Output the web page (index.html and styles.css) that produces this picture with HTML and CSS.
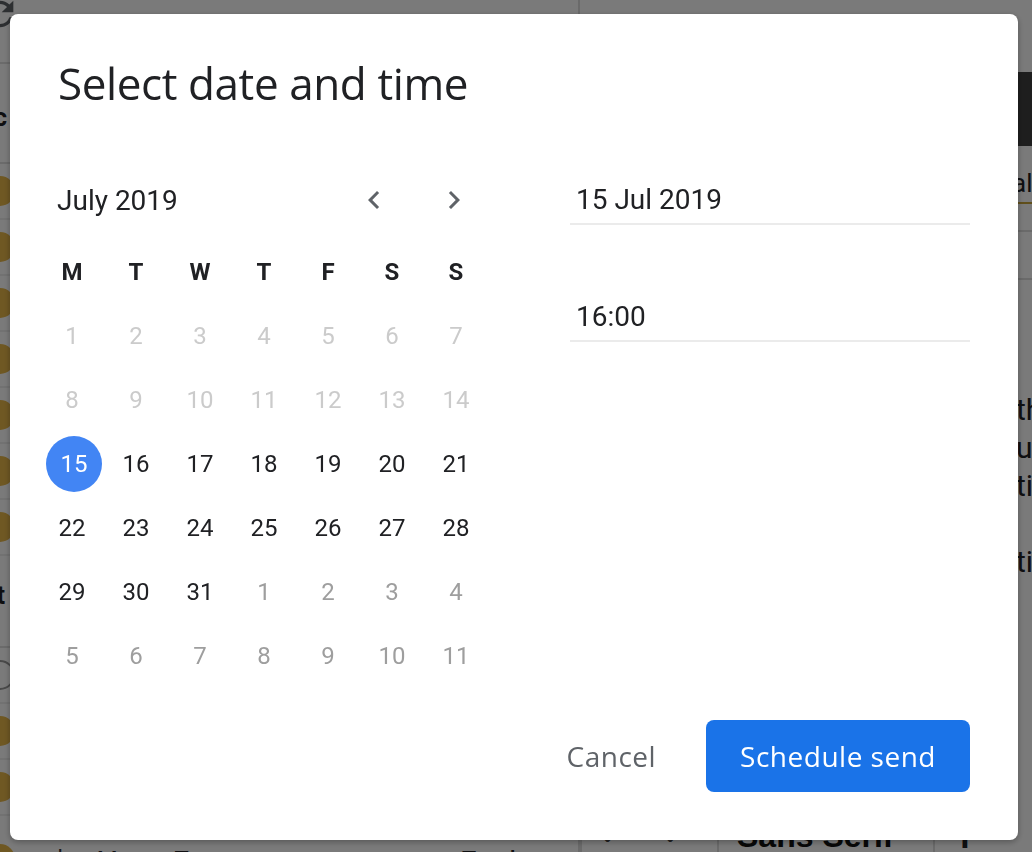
FILE: index.html
```html
<!DOCTYPE html>
<html lang="en">
<head>
    <meta charset="UTF-8">
    <meta name="viewport" content="width=device-width, initial-scale=1.0">
    <title>Schedule send</title>
    <link rel="stylesheet" href="styles.css">
</head>
<body>
    <div class="app">
        <div class="mail-list">
            <div class="toolbar">
                <svg class="refresh" viewBox="0 0 24 24" width="40" height="40"><path d="M17.65 6.35A7.958 7.958 0 0 0 12 4c-4.42 0-7.99 3.58-7.99 8s3.57 8 7.99 8c3.73 0 6.84-2.55 7.73-6h-2.08A5.99 5.99 0 0 1 12 18c-3.31 0-6-2.69-6-6s2.69-6 6-6c1.66 0 3.14.69 4.22 1.78L13 11h7V4l-2.35 2.35z"/></svg>
            </div>
            <div class="section-title">Plac</div>
            <div class="row"><span class="avatar"></span></div>
            <div class="row"><span class="avatar"></span></div>
            <div class="row"><span class="avatar"></span></div>
            <div class="row"><span class="avatar"></span></div>
            <div class="row"><span class="avatar"></span></div>
            <div class="row"><span class="avatar"></span></div>
            <div class="row"><span class="avatar"></span></div>
            <div class="section-title second">rt</div>
            <div class="row"><span class="avatar empty"></span></div>
            <div class="row"><span class="avatar"></span></div>
            <div class="row"><span class="avatar"></span></div>
            <div class="row last">
                <span class="avatar"></span>
                <span class="reply">&#10550;</span>
                <span class="sender">Yang Fu</span>
                <span class="subject">Fwd: 111</span>
            </div>
        </div>
        <div class="compose">
            <div class="compose-head"></div>
            <div class="compose-field"><span class="to">alt</span></div>
            <div class="compose-field short"></div>
            <div class="compose-body">
                <p>the</p>
                <p>ut</p>
                <p>til</p>
                <p></p>
                <p>tiv</p>
            </div>
            <div class="compose-tools">
                <span class="tool history">&#8630; &nbsp; &#8631;</span>
                <span class="tool font">Sans Serif</span>
                <span class="tool size">T</span>
            </div>
        </div>
    </div>

    <div class="scrim">
        <div class="dialog">
            <h1 class="dialog-title">Select date and time</h1>
            <div class="dialog-body">
                <div class="calendar">
                    <div class="cal-header">
                        <span class="month">July 2019</span>
                        <button class="nav prev" aria-label="Previous month">
                            <svg viewBox="0 0 24 24" width="36" height="36"><path d="M15.41 7.41L14 6l-6 6 6 6 1.41-1.41L10.83 12z"/></svg>
                        </button>
                        <button class="nav next" aria-label="Next month">
                            <svg viewBox="0 0 24 24" width="36" height="36"><path d="M10 6L8.59 7.41 13.17 12l-4.58 4.59L10 18l6-6z"/></svg>
                        </button>
                    </div>
                    <div class="weekdays">
                        <span>M</span><span>T</span><span>W</span><span>T</span><span>F</span><span>S</span><span>S</span>
                    </div>
                    <div class="days">
                        <span class="past">1</span><span class="past">2</span><span class="past">3</span><span class="past">4</span><span class="past">5</span><span class="past">6</span><span class="past">7</span>
                        <span class="past">8</span><span class="past">9</span><span class="past">10</span><span class="past">11</span><span class="past">12</span><span class="past">13</span><span class="past">14</span>
                        <span class="selected"><b>15</b></span><span>16</span><span>17</span><span>18</span><span>19</span><span>20</span><span>21</span>
                        <span>22</span><span>23</span><span>24</span><span>25</span><span>26</span><span>27</span><span>28</span>
                        <span>29</span><span>30</span><span>31</span><span class="other">1</span><span class="other">2</span><span class="other">3</span><span class="other">4</span>
                        <span class="other">5</span><span class="other">6</span><span class="other">7</span><span class="other">8</span><span class="other">9</span><span class="other">10</span><span class="other">11</span>
                    </div>
                </div>
                <div class="fields">
                    <div class="field">15 Jul 2019</div>
                    <div class="field time">16:00</div>
                </div>
            </div>
            <div class="dialog-actions">
                <button class="btn-text">Cancel</button>
                <button class="btn-primary">Schedule send</button>
            </div>
        </div>
    </div>
</body>
</html>
```

FILE: styles.css
```css
* {
    box-sizing: border-box;
}
body {
    margin: 0;
    font-family: Roboto, "Liberation Sans", sans-serif;
    color: #202124;
    overflow: hidden;
}
button {
    font: inherit;
    border: none;
    background: none;
    cursor: pointer;
}

/* background mail app */
.app {
    display: flex;
    width: 1032px;
    height: 852px;
    background: #fff;
    overflow: hidden;
}
.mail-list {
    width: 580px;
    flex-shrink: 0;
    border-right: 2px solid #ddd;
}
.toolbar {
    height: 64px;
    border-bottom: 2px solid #e0e0e0;
}
.refresh {
    margin: -6px 0 0 -20px;
    fill: #5f6368;
}
.section-title {
    height: 100px;
    padding: 38px 0 0 0;
    margin-left: -44px;
    font-size: 26px;
    font-weight: 700;
    border-bottom: 2px solid #e0e0e0;
}
.section-title.second {
    height: 92px;
    margin-left: -14px;
    padding-top: 24px;
}
.row {
    display: flex;
    align-items: center;
    height: 56px;
    border-bottom: 2px solid #eee;
    font-size: 24px;
}
.avatar {
    width: 30px;
    height: 30px;
    margin-left: -15px;
    margin-right: 28px;
    border-radius: 50%;
    background: #e8b84a;
    flex-shrink: 0;
}
.avatar.empty {
    background: none;
    border: 2px solid #999;
}
.row.last {
    align-items: flex-start;
    padding-top: 28px;
}
.reply {
    width: 26px;
    font-size: 34px;
    line-height: 20px;
    color: #333;
}
.sender {
    width: 372px;
    margin-left: 30px;
    font-size: 30px;
}
.subject {
    font-size: 30px;
}
.compose {
    flex: 1;
    display: flex;
    flex-direction: column;
    margin-top: 72px;
}
.compose-head {
    height: 74px;
    background: #404040;
}
.compose-field {
    height: 86px;
    padding: 22px 0 0 432px;
    border-bottom: 2px solid #ddd;
    font-size: 26px;
    white-space: nowrap;
}
.compose-field .to {
    display: inline-block;
    padding-bottom: 4px;
    border-bottom: 2px solid #c9a53a;
}
.compose-field.short {
    height: 48px;
}
.compose-body {
    flex: 1;
    padding: 112px 0 0 436px;
    font-size: 30px;
    white-space: nowrap;
}
.compose-body p {
    margin: 0;
    height: 38px;
}
.compose-tools {
    display: flex;
    height: 34px;
    align-items: flex-start;
    font-size: 32px;
    font-weight: 700;
}
.tool {
    padding: 0 18px;
    border-left: 2px solid #ddd;
}
.tool.history {
    width: 137px;
    color: #444;
}
.tool.font {
    width: 216px;
    font-family: "Liberation Sans", sans-serif;
    color: #111;
}
.tool.size {
    padding-left: 20px;
}

/* dialog */
.scrim {
    position: fixed;
    inset: 0;
    display: flex;
    padding: 14px 14px 12px 10px;
    background: rgba(0, 0, 0, 0.52);
}
.dialog {
    flex: 1;
    display: flex;
    flex-direction: column;
    padding: 0 48px 48px 30px;
    background: #fff;
    border-radius: 8px;
    box-shadow: 0 2px 6px rgba(0, 0, 0, 0.3);
}
.dialog-title {
    margin: 43px 0 0 18px;
    font-family: "Open Sans", sans-serif;
    font-size: 44px;
    font-weight: 400;
    letter-spacing: -0.4px;
    line-height: 52px;
    color: #202124;
}
.dialog-body {
    display: flex;
    margin-top: 59px;
}
.calendar {
    width: 448px;
}
.cal-header {
    display: flex;
    align-items: center;
    height: 64px;
}
.month {
    flex: 1;
    padding-left: 17px;
    font-size: 28px;
    color: #202124;
}
.nav {
    display: flex;
    align-items: center;
    justify-content: center;
    width: 40px;
    height: 40px;
    padding: 0;
}
.nav svg {
    fill: #5f6368;
}
.nav.prev {
    margin-right: 40px;
}
.nav.next {
    margin-right: 14px;
}
.weekdays,
.days {
    display: grid;
    grid-template-columns: repeat(7, 64px);
    grid-auto-rows: 64px;
}
.weekdays {
    margin-top: 8px;
    font-size: 24px;
    font-weight: 700;
}
.weekdays span,
.days span {
    display: flex;
    align-items: center;
    justify-content: center;
}
.days {
    font-size: 24px;
    color: #202124;
}
.days .past {
    color: #cbcbcb;
}
.days .other {
    color: #9e9e9e;
}
.days .selected b {
    display: flex;
    align-items: center;
    justify-content: center;
    width: 56px;
    height: 56px;
    margin-left: 4px;
    border-radius: 50%;
    background: #4285f4;
    color: #fff;
    font-weight: 400;
}
.fields {
    width: 400px;
    margin-left: 82px;
}
.field {
    padding: 12px 0 3px 6px;
    line-height: 40px;
    font-size: 28px;
    color: #202124;
    border-bottom: 2px solid #ebebeb;
}
.field.time {
    margin-top: 60px;
}
.dialog-actions {
    display: flex;
    justify-content: flex-end;
    align-items: center;
    margin-top: auto;
}
.btn-text,
.btn-primary {
    height: 72px;
    padding: 0 24px;
    font-family: "Open Sans", sans-serif;
    font-size: 28px;
    font-weight: 500;
    letter-spacing: 0.5px;
    border-radius: 8px;
}
.btn-text {
    margin-right: 26px;
    color: #5f6368;
}
.btn-primary {
    padding: 0 34px;
    background: #1a73e8;
    color: #fff;
}
```
